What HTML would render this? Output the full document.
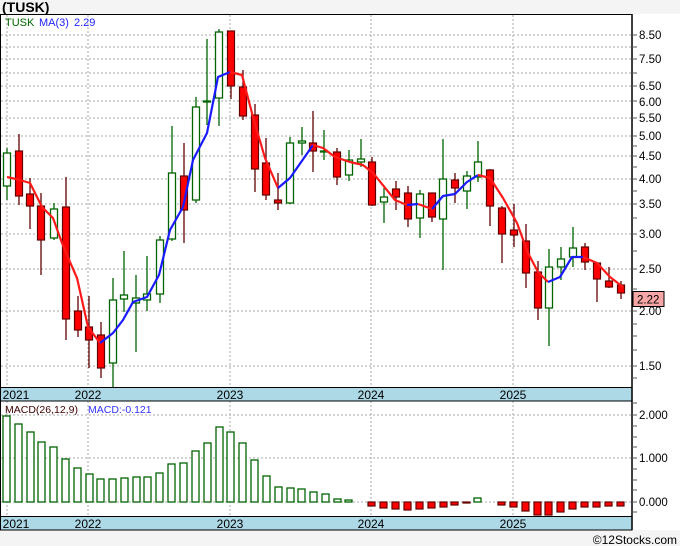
<!DOCTYPE html>
<html><head><meta charset="utf-8"><style>
html,body{margin:0;padding:0;background:#f4f4f4;}
svg{display:block;font-family:"Liberation Sans",sans-serif;}
.g{fill:#fff;stroke:#006400;stroke-width:1.3}
.gw{stroke:#006400;stroke-width:1.3}
.r{fill:#f00;stroke:#600000;stroke-width:1.2}
.rw{stroke:#600000;stroke-width:1.3}
.grid{stroke:#a8a8a8;stroke-width:1;stroke-dasharray:2,2}
.ax{font-size:11.5px;fill:#000}
</style></head><body>
<svg width="680" height="546" viewBox="0 0 680 546">
<rect x="0" y="0" width="680" height="546" fill="#f4f4f4"/>
<text x="2" y="12" font-size="14" font-weight="bold" fill="#000">(TUSK)</text>
<rect x="0.5" y="14.5" width="631.5" height="515" fill="#fff" stroke="#000"/>
<!-- price grid -->
<g class="grid">
<line x1="1" x2="632" y1="35" y2="35"/><line x1="1" x2="632" y1="47" y2="47"/><line x1="1" x2="632" y1="59" y2="59"/><line x1="1" x2="632" y1="73" y2="73"/><line x1="1" x2="632" y1="86" y2="86"/><line x1="1" x2="632" y1="101" y2="101"/><line x1="1" x2="632" y1="118" y2="118"/><line x1="1" x2="632" y1="136" y2="136"/><line x1="1" x2="632" y1="156" y2="156"/><line x1="1" x2="632" y1="179" y2="179"/><line x1="1" x2="632" y1="204" y2="204"/><line x1="1" x2="632" y1="234" y2="234"/><line x1="1" x2="632" y1="269" y2="269"/><line x1="1" x2="632" y1="311" y2="311"/><line x1="1" x2="632" y1="366" y2="366"/>
<line x1="7" x2="7" y1="15" y2="387"/><line x1="88" x2="88" y1="15" y2="387"/><line x1="230" x2="230" y1="15" y2="387"/><line x1="371" x2="371" y1="15" y2="387"/><line x1="513" x2="513" y1="15" y2="387"/>
<line x1="1" x2="632" y1="415" y2="415"/><line x1="1" x2="632" y1="458" y2="458"/><line x1="1" x2="632" y1="502" y2="502"/>
<line x1="7" x2="7" y1="401" y2="516"/><line x1="88" x2="88" y1="401" y2="516"/><line x1="230" x2="230" y1="401" y2="516"/><line x1="371" x2="371" y1="401" y2="516"/><line x1="513" x2="513" y1="401" y2="516"/>
</g>
<text x="5" y="26" font-size="11" fill="#006400">TUSK</text>
<text x="39" y="26" font-size="11" fill="#2222ff">MA(3)</text>
<text x="74" y="26" font-size="11" fill="#2222ff">2.29</text>
<!-- candles -->
<g id="c">
<line class="gw" x1="7" x2="7" y1="148" y2="200"/><rect class="g" x="3.5" y="153" width="7" height="33"/>
<line class="rw" x1="19" x2="19" y1="134" y2="205"/><rect class="r" x="15.5" y="151" width="7" height="45"/>
<line class="rw" x1="30" x2="30" y1="178" y2="229"/><rect class="r" x="26.5" y="194" width="7" height="12"/>
<line class="rw" x1="41" x2="41" y1="193" y2="275"/><rect class="r" x="37.5" y="206" width="7" height="34"/>
<line class="gw" x1="54" x2="54" y1="203" y2="240"/><rect class="g" x="50.5" y="209" width="7" height="29"/>
<line class="rw" x1="66" x2="66" y1="177" y2="340"/><rect class="r" x="62.5" y="207" width="7" height="112"/>
<line class="rw" x1="78" x2="78" y1="296" y2="337"/><rect class="r" x="74.5" y="311" width="7" height="19"/>
<line class="rw" x1="89" x2="89" y1="296" y2="368"/><rect class="r" x="85.5" y="327" width="7" height="13"/>
<line class="rw" x1="101" x2="101" y1="322" y2="378"/><rect class="r" x="97.5" y="335" width="7" height="33"/>
<line class="gw" x1="113" x2="113" y1="278" y2="387"/><rect class="g" x="109.5" y="300" width="7" height="63"/>
<line class="gw" x1="124" x2="124" y1="251" y2="312"/><rect class="g" x="120.5" y="295" width="7" height="4"/>
<line class="gw" x1="136" x2="136" y1="275" y2="352"/><rect class="g" x="132.5" y="298" width="7" height="5"/>
<line class="gw" x1="147" x2="147" y1="256" y2="311"/><rect class="g" x="143.5" y="294" width="7" height="6"/>
<line class="gw" x1="160" x2="160" y1="236" y2="303"/><rect class="g" x="156.5" y="240" width="7" height="54"/>
<line class="gw" x1="172" x2="172" y1="126" y2="241"/><rect class="g" x="168.5" y="173" width="7" height="66"/>
<line class="rw" x1="184" x2="184" y1="143" y2="243"/><rect class="r" x="180.5" y="176" width="7" height="34"/>
<line class="gw" x1="196" x2="196" y1="97" y2="203"/><rect class="g" x="192.5" y="107" width="7" height="93"/>
<line class="gw" x1="207" x2="207" y1="39" y2="125"/><rect class="g" x="203.5" y="101" width="7" height="1"/>
<line class="gw" x1="219" x2="219" y1="29" y2="126"/><rect class="g" x="215.5" y="32" width="7" height="66"/>
<line class="rw" x1="231" x2="231" y1="31" y2="99"/><rect class="r" x="227.5" y="31" width="7" height="55"/>
<line class="rw" x1="243" x2="243" y1="70" y2="120"/><rect class="r" x="239.5" y="87" width="7" height="29"/>
<line class="rw" x1="255" x2="255" y1="104" y2="192"/><rect class="r" x="251.5" y="115" width="7" height="54"/>
<line class="rw" x1="266" x2="266" y1="138" y2="200"/><rect class="r" x="262.5" y="163" width="7" height="32"/>
<line class="rw" x1="278" x2="278" y1="173" y2="210"/><rect class="r" x="274.5" y="200" width="7" height="3"/>
<line class="gw" x1="290" x2="290" y1="137" y2="204"/><rect class="g" x="286.5" y="143" width="7" height="60"/>
<line class="gw" x1="302" x2="302" y1="127" y2="155"/><rect class="g" x="298.5" y="141" width="7" height="2"/>
<line class="rw" x1="313" x2="313" y1="111" y2="172"/><rect class="r" x="309.5" y="143" width="7" height="8"/>
<line class="gw" x1="324" x2="324" y1="130" y2="160"/><rect class="g" x="320.5" y="151" width="7" height="1"/>
<line class="rw" x1="337" x2="337" y1="148" y2="185"/><rect class="r" x="333.5" y="152" width="7" height="25"/>
<line class="gw" x1="349" x2="349" y1="150" y2="181"/><rect class="g" x="345.5" y="160" width="7" height="15"/>
<line class="gw" x1="361" x2="361" y1="139" y2="167"/><rect class="g" x="357.5" y="159" width="7" height="3"/>
<line class="rw" x1="372" x2="372" y1="157" y2="206"/><rect class="r" x="368.5" y="162" width="7" height="43"/>
<line class="gw" x1="384" x2="384" y1="188" y2="223"/><rect class="g" x="380.5" y="197" width="7" height="5"/>
<line class="rw" x1="396" x2="396" y1="181" y2="210"/><rect class="r" x="392.5" y="189" width="7" height="8"/>
<line class="rw" x1="408" x2="408" y1="186" y2="227"/><rect class="r" x="404.5" y="193" width="7" height="26"/>
<line class="gw" x1="420" x2="420" y1="190" y2="238"/><rect class="g" x="416.5" y="194" width="7" height="24"/>
<line class="rw" x1="432" x2="432" y1="193" y2="222"/><rect class="r" x="428.5" y="193" width="7" height="24"/>
<line class="gw" x1="443" x2="443" y1="139" y2="270"/><rect class="g" x="439.5" y="179" width="7" height="40"/>
<line class="rw" x1="455" x2="455" y1="173" y2="203"/><rect class="r" x="451.5" y="180" width="7" height="8"/>
<line class="gw" x1="467" x2="467" y1="171" y2="209"/><rect class="g" x="463.5" y="176" width="7" height="15"/>
<line class="gw" x1="478" x2="478" y1="141" y2="182"/><rect class="g" x="474.5" y="162" width="7" height="15"/>
<line class="rw" x1="490" x2="490" y1="169" y2="226"/><rect class="r" x="486.5" y="170" width="7" height="36"/>
<line class="rw" x1="502" x2="502" y1="206" y2="263"/><rect class="r" x="498.5" y="208" width="7" height="26"/>
<line class="rw" x1="514" x2="514" y1="204" y2="247"/><rect class="r" x="510.5" y="230" width="7" height="5"/>
<line class="rw" x1="526" x2="526" y1="224" y2="288"/><rect class="r" x="522.5" y="241" width="7" height="32"/>
<line class="rw" x1="538" x2="538" y1="261" y2="320"/><rect class="r" x="534.5" y="272" width="7" height="36"/>
<line class="gw" x1="549" x2="549" y1="249" y2="346"/><rect class="g" x="545.5" y="267" width="7" height="41"/>
<line class="gw" x1="561" x2="561" y1="247" y2="280"/><rect class="g" x="557.5" y="259" width="7" height="8"/>
<line class="gw" x1="573" x2="573" y1="227" y2="267"/><rect class="g" x="569.5" y="248" width="7" height="9"/>
<line class="rw" x1="585" x2="585" y1="243" y2="270"/><rect class="r" x="581.5" y="247" width="7" height="15"/>
<line class="rw" x1="597" x2="597" y1="263" y2="302"/><rect class="r" x="593.5" y="263" width="7" height="16"/>
<line class="rw" x1="609" x2="609" y1="267" y2="288"/><rect class="r" x="605.5" y="281" width="7" height="6"/>
<line class="rw" x1="621" x2="621" y1="281" y2="299"/><rect class="r" x="617.5" y="285" width="7" height="8"/>
</g>
<!-- MA -->
<g fill="none" stroke-width="2.2" stroke-linejoin="round">
<polyline stroke="#ff1a1a" points="7,177 20,180 30,183 42,207 53,218 62,243 70,262 77,278 88,327 100,343"/>
<polyline stroke="#1a1aff" points="100,343 113,333 123,320 133,302 147,297 159,275 170,230 183,207 193,160 207,133 218,77 230,72"/>
<polyline stroke="#ff1a1a" points="230,72 242,75 253,117 265,158 278,188"/>
<polyline stroke="#1a1aff" points="278,188 290,178 313,145"/>
<polyline stroke="#ff1a1a" points="313,145 323,148 335,157 350,162 363,165 373,173 395,200 407,205"/>
<polyline stroke="#1a1aff" points="407,205 418,204"/>
<polyline stroke="#ff1a1a" points="418,204 432,209"/>
<polyline stroke="#1a1aff" points="432,209 443,196 455,194 467,182 478,175"/>
<polyline stroke="#ff1a1a" points="478,175 490,178 503,198 517,223 528,253 538,272 548,282"/>
<polyline stroke="#1a1aff" points="548,282 560,277 572,257 583,257"/>
<polyline stroke="#ff1a1a" points="583,257 597,263 610,277 623,287"/>
</g>
<!-- year bands -->
<rect x="0.5" y="387.5" width="631.5" height="13.5" fill="#add8e6" stroke="#000"/>
<rect x="0.5" y="516.5" width="631.5" height="13.5" fill="#add8e6" stroke="#000"/>
<g font-size="12" fill="#000" text-anchor="middle">
<text x="16" y="399">2021</text><text x="88" y="399">2022</text><text x="230" y="399">2023</text><text x="371" y="399">2024</text><text x="513" y="399">2025</text>
<text x="16" y="528">2021</text><text x="88" y="528">2022</text><text x="230" y="528">2023</text><text x="371" y="528">2024</text><text x="513" y="528">2025</text>
</g>
<!-- MACD -->
<text x="5" y="413" font-size="10.5" fill="#400000">MACD(26,12,9)</text>
<text x="88" y="413" font-size="10.5" fill="#3333ff">MACD:-0.121</text>
<g class="g">
<rect x="3" y="416" width="7" height="86"/><rect x="15" y="424" width="7" height="78"/><rect x="27" y="432" width="7" height="70"/><rect x="38" y="442" width="7" height="60"/><rect x="50" y="447" width="7" height="55"/><rect x="62" y="459" width="7" height="43"/><rect x="74" y="468" width="7" height="34"/><rect x="86" y="474" width="7" height="28"/><rect x="97" y="479" width="7" height="23"/><rect x="109" y="479" width="7" height="23"/><rect x="121" y="478" width="7" height="24"/><rect x="133" y="477" width="7" height="25"/><rect x="144" y="477" width="7" height="25"/><rect x="156" y="473" width="7" height="29"/><rect x="168" y="464" width="7" height="38"/><rect x="180" y="463" width="7" height="39"/><rect x="192" y="451" width="7" height="51"/><rect x="204" y="443" width="7" height="59"/><rect x="216" y="427" width="7" height="75"/><rect x="227" y="432" width="7" height="70"/><rect x="239" y="443" width="7" height="59"/><rect x="251" y="460" width="7" height="42"/><rect x="263" y="476" width="7" height="26"/><rect x="275" y="487" width="7" height="15"/><rect x="287" y="488" width="7" height="14"/><rect x="298" y="489" width="7" height="13"/><rect x="310" y="492" width="7" height="10"/><rect x="322" y="494" width="7" height="8"/><rect x="334" y="499" width="7" height="3"/><rect x="345" y="500" width="7" height="2"/><rect x="474" y="498" width="7" height="4"/>
</g>
<g class="r">
<rect x="368" y="502" width="7" height="4"/><rect x="380" y="502" width="7" height="6"/><rect x="392" y="502" width="7" height="7"/><rect x="404" y="502" width="7" height="8"/><rect x="416" y="502" width="7" height="7"/><rect x="428" y="502" width="7" height="6"/><rect x="440" y="502" width="7" height="5"/><rect x="451" y="502" width="7" height="3"/><rect x="463" y="502" width="7" height="1"/><rect x="498" y="502" width="7" height="3"/><rect x="510" y="502" width="7" height="5"/><rect x="522" y="502" width="7" height="9"/><rect x="534" y="502" width="7" height="13"/><rect x="545" y="502" width="7" height="13"/><rect x="557" y="502" width="7" height="10"/><rect x="569" y="502" width="7" height="7"/><rect x="581" y="502" width="7" height="5"/><rect x="593" y="502" width="7" height="5"/><rect x="605" y="502" width="7" height="4"/><rect x="617" y="502" width="7" height="4"/>
</g>
<!-- right axis -->
<rect x="633" y="14" width="47" height="516" fill="#fff"/>
<line x1="632" x2="632" y1="14" y2="530" stroke="#000" stroke-width="1.5"/>
<g stroke="#555" stroke-width="1">
<line x1="632" x2="637" y1="35" y2="35"/><line x1="632" x2="637" y1="47" y2="47"/><line x1="632" x2="637" y1="59" y2="59"/><line x1="632" x2="637" y1="73" y2="73"/><line x1="632" x2="637" y1="86" y2="86"/><line x1="632" x2="637" y1="101" y2="101"/><line x1="632" x2="637" y1="118" y2="118"/><line x1="632" x2="637" y1="136" y2="136"/><line x1="632" x2="637" y1="146" y2="146"/><line x1="632" x2="637" y1="156" y2="156"/><line x1="632" x2="637" y1="167" y2="167"/><line x1="632" x2="637" y1="179" y2="179"/><line x1="632" x2="637" y1="191" y2="191"/><line x1="632" x2="637" y1="204" y2="204"/><line x1="632" x2="637" y1="218" y2="218"/><line x1="632" x2="637" y1="234" y2="234"/><line x1="632" x2="637" y1="251" y2="251"/><line x1="632" x2="637" y1="269" y2="269"/><line x1="632" x2="637" y1="289" y2="289"/><line x1="632" x2="637" y1="311" y2="311"/><line x1="632" x2="637" y1="324" y2="324"/><line x1="632" x2="637" y1="336" y2="336"/><line x1="632" x2="637" y1="350" y2="350"/><line x1="632" x2="637" y1="366" y2="366"/><line x1="632" x2="637" y1="378" y2="378"/>
<line x1="632" x2="637" y1="403" y2="403"/><line x1="632" x2="637" y1="415" y2="415"/><line x1="632" x2="637" y1="426" y2="426"/><line x1="632" x2="637" y1="437" y2="437"/><line x1="632" x2="637" y1="447" y2="447"/><line x1="632" x2="637" y1="458" y2="458"/><line x1="632" x2="637" y1="469" y2="469"/><line x1="632" x2="637" y1="480" y2="480"/><line x1="632" x2="637" y1="490" y2="490"/><line x1="632" x2="637" y1="502" y2="502"/><line x1="632" x2="637" y1="512" y2="512"/>
</g>
<g class="ax">
<text x="639" y="39">8.50</text><text x="639" y="63">7.50</text><text x="639" y="90">6.50</text><text x="639" y="106">6.00</text><text x="639" y="122">5.50</text><text x="639" y="140">5.00</text><text x="639" y="160">4.50</text><text x="639" y="183">4.00</text><text x="639" y="208">3.50</text><text x="639" y="238">3.00</text><text x="639" y="273">2.50</text><text x="639" y="315">2.00</text><text x="639" y="370">1.50</text>
<text x="639" y="419">2.000</text><text x="639" y="462">1.000</text><text x="639" y="506">0.000</text>
</g>
<rect x="633" y="291.5" width="31" height="15" fill="#f6a6a6" stroke="#000"/>
<text x="637" y="303.5" class="ax">2.22</text>
<rect x="0" y="531" width="680" height="15" fill="#f4f4f4"/>
<text x="677" y="544" font-size="12" fill="#000" text-anchor="end">©12Stocks.com</text>
</svg>
</body></html>
